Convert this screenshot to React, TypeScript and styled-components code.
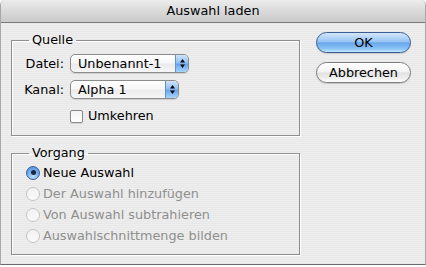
import React from 'react';
import styled, { createGlobalStyle } from 'styled-components';

const Global = createGlobalStyle`
  html, body { margin: 0; padding: 0; background: #ffffff; }
  body { font-family: "DejaVu Sans", "Liberation Sans", sans-serif; color: #000; }
`;

const Window = styled.div`
  width: 426px;
  height: 265px;
  box-sizing: border-box;
  border-radius: 5px 5px 0 0;
  overflow: hidden;
  border-left: 1px solid #a8a8a8;
  border-right: 1px solid #a8a8a8;
  border-bottom: 1px solid #6a6a6a;
  background: repeating-linear-gradient(to bottom, #eeeeee 0, #eeeeee 1px, #e8e8e8 1px, #e8e8e8 2px);
  display: flex;
  flex-direction: column;
`;

const TitleBar = styled.div`
  height: 22px;
  border-bottom: 1px solid #7d7d7d;
  background: linear-gradient(to bottom, #ececec 0%, #dadada 50%, #c9c9c9 100%);
  font-size: 12.8px;
  line-height: 22px;
  text-align: center;
  flex-shrink: 0;
`;

const Body = styled.div`
  display: flex;
  padding: 9px 0 0 10px;
  gap: 16px;
`;

const LeftColumn = styled.div`
  width: 289px;
  display: flex;
  flex-direction: column;
  gap: 9px;
`;

const Group = styled.fieldset`
  margin: 0;
  padding: 0;
  min-width: 0;
  border: 1px solid #8e8e8e;
  box-shadow: 1px 1px 0 #ffffff, inset 1px 1px 0 #ffffff;
`;

const Legend = styled.legend`
  margin-left: 17px;
  padding: 0 3px;
  font-size: 12.8px;
  line-height: 16px;
`;

const FormGrid = styled.div`
  display: grid;
  grid-template-columns: 52px auto;
  column-gap: 6px;
  row-gap: 7px;
  align-items: center;
  justify-items: start;
  padding: 6px 0 12px 0;
`;

const FieldLabel = styled.label`
  justify-self: end;
  font-size: 12.8px;
  line-height: 19px;
`;

const Popup = styled.div<{ $w: number }>`
  width: ${(p) => p.$w}px;
  height: 19px;
  box-sizing: border-box;
  border: 1px solid #8c8c8c;
  border-radius: 5px;
  background: linear-gradient(to bottom, #ffffff 0%, #f7f7f7 45%, #ebebeb 55%, #f6f6f6 100%);
  display: flex;
  overflow: hidden;
  box-shadow: 0 1px 1px rgba(0, 0, 0, 0.12);
`;

const PopupText = styled.span`
  flex: 1;
  padding-left: 7px;
  font-size: 12.8px;
  line-height: 17px;
  white-space: nowrap;
`;

const PopupArrows = styled.span`
  width: 12px;
  border-left: 1px solid #6b8fc4;
  background: linear-gradient(to bottom, #cfe3fa 0%, #92c0f2 45%, #6aa6ec 55%, #a6d6fb 100%);
  display: flex;
  align-items: center;
  justify-content: center;
`;

const CheckRow = styled.label`
  grid-column: 2;
  display: flex;
  align-items: center;
  gap: 5px;
  font-size: 12.8px;
  line-height: 14px;
  margin-top: 3px;
`;

const CheckBox = styled.span`
  width: 13px;
  height: 13px;
  box-sizing: border-box;
  border: 1px solid #8a8a8a;
  border-radius: 2px;
  background: linear-gradient(to bottom, #f3f3f3, #ffffff);
  box-shadow: 0 1px 1px rgba(0, 0, 0, 0.1);
`;

const RadioList = styled.div`
  display: flex;
  flex-direction: column;
  padding: 1px 0 8px 14px;
`;

const RadioRow = styled.div<{ $disabled?: boolean }>`
  height: 21px;
  display: flex;
  align-items: center;
  gap: 3px;
  font-size: 12.8px;
  color: ${(p) => (p.$disabled ? '#8f8f8f' : '#000')};
`;

const RadioDot = styled.span<{ $on?: boolean; $disabled?: boolean }>`
  width: 14px;
  height: 14px;
  box-sizing: border-box;
  border-radius: 50%;
  display: flex;
  align-items: center;
  justify-content: center;
  border: 1px solid ${(p) => (p.$on ? '#3d5f96' : p.$disabled ? '#c4c4c4' : '#8a8a8a')};
  background: ${(p) =>
    p.$on
      ? 'radial-gradient(circle at 50% 80%, #b9e2fd 0%, #6ea9ec 55%, #4f8ee0 100%)'
      : 'linear-gradient(to bottom, #f2f2f2, #fafafa)'};
  &::after {
    content: '';
    width: 5px;
    height: 5px;
    border-radius: 50%;
    background: #1b2a44;
    display: ${(p) => (p.$on ? 'block' : 'none')};
  }
`;

const RightColumn = styled.div`
  width: 95px;
  display: flex;
  flex-direction: column;
  gap: 9px;
`;

const Button = styled.button<{ $primary?: boolean }>`
  height: 21px;
  width: 95px;
  padding: 0;
  border-radius: 11px;
  font-family: inherit;
  font-size: 12.8px;
  color: #000;
  border: 1px solid ${(p) => (p.$primary ? '#3b5d93' : '#7d7d7d')};
  background: ${(p) =>
    p.$primary
      ? 'linear-gradient(to bottom, #d3e6fb 0%, #98c5f4 45%, #6aa7ec 52%, #86bff4 80%, #bfe6fd 100%)'
      : 'linear-gradient(to bottom, #ffffff 0%, #f4f4f4 45%, #e2e2e2 52%, #eeeeee 80%, #ffffff 100%)'};
  box-shadow: 0 1px 1px rgba(0, 0, 0, 0.15);
`;

function Arrows() {
  return (
    <svg width="7" height="11" viewBox="0 0 7 11">
      <path d="M3.5 1 L6 4.5 L1 4.5 Z" fill="#000" />
      <path d="M3.5 10 L6 6.5 L1 6.5 Z" fill="#000" />
    </svg>
  );
}

const radios = [
  { label: 'Neue Auswahl', on: true },
  { label: 'Der Auswahl hinzufügen', disabled: true },
  { label: 'Von Auswahl subtrahieren', disabled: true },
  { label: 'Auswahlschnittmenge bilden', disabled: true },
];

export default function App() {
  return (
    <>
      <Global />
      <Window>
        <TitleBar>Auswahl laden</TitleBar>
        <Body>
          <LeftColumn>
            <Group>
              <Legend>Quelle</Legend>
              <FormGrid>
                <FieldLabel>Datei:</FieldLabel>
                <Popup $w={119}>
                  <PopupText>Unbenannt-1</PopupText>
                  <PopupArrows>
                    <Arrows />
                  </PopupArrows>
                </Popup>
                <FieldLabel>Kanal:</FieldLabel>
                <Popup $w={109}>
                  <PopupText>Alpha 1</PopupText>
                  <PopupArrows>
                    <Arrows />
                  </PopupArrows>
                </Popup>
                <CheckRow>
                  <CheckBox />
                  Umkehren
                </CheckRow>
              </FormGrid>
            </Group>
            <Group>
              <Legend>Vorgang</Legend>
              <RadioList>
                {radios.map((r) => (
                  <RadioRow key={r.label} $disabled={r.disabled}>
                    <RadioDot $on={r.on} $disabled={r.disabled} />
                    {r.label}
                  </RadioRow>
                ))}
              </RadioList>
            </Group>
          </LeftColumn>
          <RightColumn>
            <Button $primary>OK</Button>
            <Button>Abbrechen</Button>
          </RightColumn>
        </Body>
      </Window>
    </>
  );
}
